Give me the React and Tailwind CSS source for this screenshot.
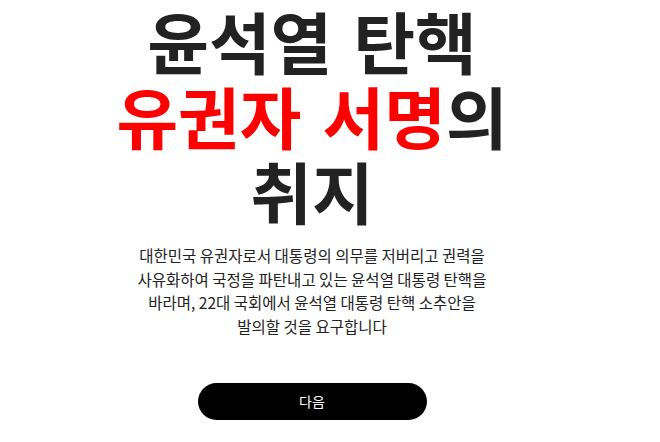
export default function App() {
  return (
    <div
      className="w-[624px] flex flex-col items-center bg-white"
      style={{ fontFamily: '"Noto Sans CJK KR", "Noto Sans", sans-serif' }}
    >
      <h1 className="w-[440px] text-center font-bold text-[67px] leading-[75px] text-[#222222] mt-[2px] break-keep [word-spacing:6px]">
        윤석열 탄핵 <span className="text-[#ff0000]">유권자 서명</span>의 취지
      </h1>
      <p className="mt-[17px] w-[370px] text-center text-[15.5px] leading-[23.7px] text-[#222222] break-keep">
        대한민국 유권자로서 대통령의 의무를 저버리고 권력을 사유화하여 국정을 파탄내고 있는 윤석열 대통령 탄핵을 바라며, 22대 국회에서 윤석열 대통령 탄핵 소추안을 발의할 것을 요구합니다
      </p>
      <button className="mt-[44px] w-[229px] h-[37px] rounded-full bg-black text-white text-[14px]">
        다음
      </button>
    </div>
  );
}
